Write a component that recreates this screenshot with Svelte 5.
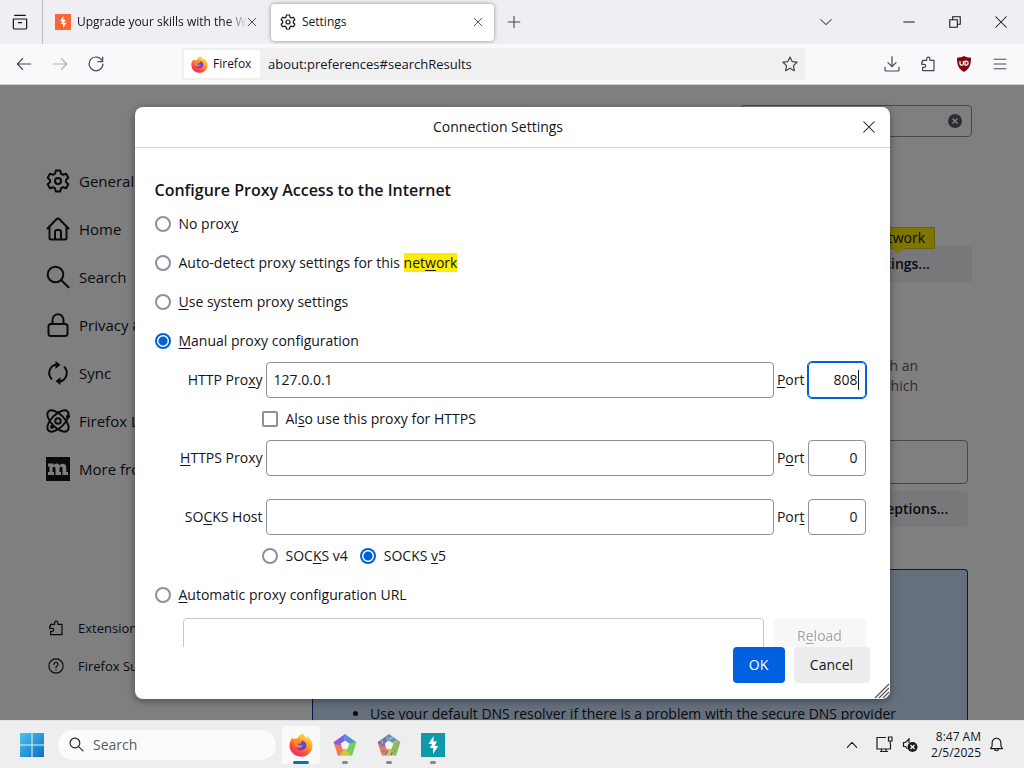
<script>
  const nav = [
    { icon: 'gear', label: 'General' },
    { icon: 'home', label: 'Home' },
    { icon: 'search', label: 'Search' },
    { icon: 'lock', label: 'Privacy & Security' },
    { icon: 'sync', label: 'Sync' },
    { icon: 'labs', label: 'Firefox Labs' },
    { icon: 'mozilla', label: 'More from Mozilla' },
  ];
  const support = [
    { icon: 'puzzle', label: 'Extensions & Themes' },
    { icon: 'help', label: 'Firefox Support' },
  ];

  let mode = $state('manual');
  let socks = $state('5');
  let shareProxy = $state(false);
  let address = $state('about:preferences#searchResults');
  let httpHost = $state('127.0.0.1');
  let httpPort = $state('808');
  let httpsHost = $state('');
  let httpsPort = $state('0');
  let socksHost = $state('');
  let socksPort = $state('0');
  let autoUrl = $state('');

  // Sides of the pentagon, clockwise from the bottom one.
  const sides = [
    { angle: 0, color: '#d3c73f' },
    { angle: 72, color: '#f4794e' },
    { angle: 144, color: '#8560dc' },
    { angle: 216, color: '#5b8de0' },
    { angle: 288, color: '#74cf5c' },
  ];
</script>

{#snippet icon(name, size = 16)}
  <svg class="icon" width={size} height={size} viewBox="0 0 24 24" fill="none" stroke="currentColor" stroke-width={size > 20 ? 2 : 1.8} stroke-linecap="round" stroke-linejoin="round" aria-hidden="true">
    {#if name === 'gear'}
      <path d="M9.8 1.5h4.4l.8 3.2 2 1.1 3.1-1 2.2 3.9-2.3 2.2v2.2l2.3 2.2-2.2 3.9-3.1-1-2 1.2-.8 3.1H9.8L9 19.4l-2-1.2-3.1 1-2.2-3.9L4 13.1v-2.2L1.7 8.7l2.2-3.9 3.1 1 2-1.1z" />
      <circle cx="12" cy="12" r="3" />
    {:else if name === 'home'}
      <path d="M1.5 11.5 10.7 2a1.8 1.8 0 0 1 2.6 0l9.2 9.5M3.5 9.8V21a1.5 1.5 0 0 0 1.5 1.5h14a1.5 1.5 0 0 0 1.5-1.5V9.8M9 22v-7a2 2 0 0 1 2-2h2a2 2 0 0 1 2 2v7" />
    {:else if name === 'search'}
      <circle cx="9.5" cy="9.5" r="7.8" /><path d="m15.3 15.3 7.2 7" />
    {:else if name === 'lock'}
      <rect x="2.5" y="11" width="19" height="12" rx="2.5" /><path d="M6.5 11V6.800a5.500 5.500 0 0 1 11 0V11" />
    {:else if name === 'sync'}
      <path d="M10 3.500a8.700 8.700 0 0 0-4.500 14.300M14 20.500A8.700 8.700 0 0 0 18.500 6.200" />
      <path d="M9.500 0 14.500 3.800 9.500 8zM14.500 16 9.500 20.200l5 3.800z" fill="currentColor" stroke="none" />
    {:else if name === 'labs'}
      <ellipse cx="12" cy="12" rx="13.500" ry="6.500" transform="rotate(45 12 12)" />
      <ellipse cx="12" cy="12" rx="13.500" ry="6.500" transform="rotate(-45 12 12)" />
      <circle cx="12" cy="12" r="2.800" />
      <circle cx="22" cy="7.500" r="1" fill="currentColor" /><circle cx="6" cy="18" r="1" fill="currentColor" />
    {:else if name === 'puzzle'}
      <path d="M4 9V6.500h6V4.200a2.400 2.400 0 0 1 4.800 0v2.300H21V22H4v-5h2.300a2.200 2.200 0 0 0 0-4.500H2.500V9z" />
    {:else if name === 'help'}
      <circle cx="12" cy="12" r="10.700" /><path d="M9 9.500a3 3 0 1 1 4.500 2.600c-1 .6-1.500 1-1.500 2.200M12 17.500v.2" />
    {:else if name === 'back'}
      <path d="M22 12H2.500M10 4l-8 8 8 8" />
    {:else if name === 'forward'}
      <path d="M2 12h19.500M14 4l8 8-8 8" />
    {:else if name === 'reload'}
      <path d="M20.500 6A10.300 10.300 0 1 0 22.300 12M22 1.500v7h-7" />
    {:else if name === 'star'}
      <path d="m12 1.500 3.200 6.800 7.300 1-5.300 5.200 1.300 7.500-6.500-3.600L5.500 22l1.300-7.500L1.500 9.300l7.300-1z" />
    {:else if name === 'download'}
      <path d="M12 1v14.500M6 10l6 6 6-6M1.500 17v3.500a2 2 0 0 0 2 2h17a2 2 0 0 0 2-2V17" />
    {:else if name === 'menu'}
      <path d="M2 4h20M2 12h20M2 20h20" />
    {:else if name === 'close'}
      <path d="m3 3 18 18M21 3 3 21" />
    {:else if name === 'plus'}
      <path d="M12 2v20M2 12h20" />
    {:else if name === 'down'}
      <path d="m3 8 9 8.500L21 8" />
    {:else if name === 'up'}
      <path d="m4 16 8-8.500 8 8.500" />
    {:else if name === 'minimize'}
      <path d="M3 12h18" />
    {:else if name === 'restore'}
      <path d="M3 8h13v13H3zM8 8V3h13v13h-5" stroke-linejoin="miter" />
    {:else if name === 'view'}
      <path d="M2 7.500h20v13a2 2 0 0 1-2 2H4a2 2 0 0 1-2-2zM4 2h16M9.500 13h5" />
    {:else if name === 'bell'}
      <path d="M2.500 18.500h19L19 14.500V9A7 7 0 0 0 5 9v5.500zM9 19a3 3 0 0 0 6 0" />
    {/if}
  </svg>
{/snippet}

{#snippet firefox(size)}
  <svg width={size} height={size} viewBox="0 0 24 24" aria-hidden="true">
    <defs>
      <linearGradient id="flame{size}" x1="0.85" y1="0.05" x2="0.25" y2="1">
        <stop offset="0" stop-color="#fff04a" /><stop offset="0.35" stop-color="#ffa72b" /><stop offset="0.7" stop-color="#ff4f3d" /><stop offset="1" stop-color="#e6276a" />
      </linearGradient>
    </defs>
    <path d="M14.500.5c.4 2.200 1.500 3 3 4.200.7-.4.600-1.200.500-2 3.500 2.300 5.600 6 5.500 10C23.400 19 18.300 23.700 12 23.700S.500 18.700.500 12.600C.500 9.500 1.700 6.700 3.600 4.600c.1 1 .4 1.600.9 2C6 5.500 7.300 5.400 8.300 5.600 9.800 2.300 12 1 14.500.5z" fill="url(#flame{size})" />
    <path d="M12.500 7.500c3 .2 5 2.300 4.800 5.200-.2 2.800-2.500 4.600-5.200 4.600-2.900 0-5.200-2-5.200-4.800 0-1 .3-2 1-2.700 1 1.200 2.500.3 4 .7.500-1 .700-1.700.6-3z" fill="#7140d8" />
    <path d="M4.500 6.600C6.500 5.500 8.200 6 9 7.300c1 .4 2.400.4 3 .8-.4 1.800-3 1.800-3.200 3.400 1.600 2 3.200.4 5 1-1.300 2.700-5.800 3.200-7.900.3-1.100-2-.9-4.500-1.400-6.200z" fill="#ff8a2a" />
  </svg>
{/snippet}

{#snippet lightning(fg, bg, size)}
  <svg width={size} height={size} viewBox="0 0 24 24" aria-hidden="true">
    <rect width="24" height="24" fill={bg} />
    <path d="M12.500 3v5.500h3.500l-2.500 4.500h3.800L12 21v-6H8.700l2.500-4H7.500z" fill={fg} />
  </svg>
{/snippet}

{#snippet pentagon(striped)}
  <svg width="24" height="24" viewBox="-12 -12 24 24" aria-hidden="true">
    {#each sides as side, i}
      <path d="M-6.300 8.700 6.300 8.700 3 4-3 4z" fill={side.color} stroke={side.color} stroke-width="2" stroke-linejoin="round" transform="translate(0 1) rotate({side.angle})" />
      {#if striped}
        <path d="M-4 9-1 4.500M2 9 4 5.500" stroke={sides[(i + 2) % 5].color} stroke-width="1.600" transform="translate(0 1) rotate({side.angle})" />
      {/if}
    {/each}
    <path d="M0 5.500-4.300 2.400-2.600-2.600H2.600L4.300 2.400z" fill="#f4f4f6" transform="translate(0 1) rotate(180)" />
  </svg>
{/snippet}

<div class="screen">
  <header class="tabs">
    <button class="plain view" aria-label="Firefox View">{@render icon('view')}</button>
    <div class="tab first">
      {@render lightning('#fff', '#ff6633', 16)}
      <span class="title fade">Upgrade your skills with the We</span>
      <button class="plain" aria-label="Close tab">{@render icon('close', 10)}</button>
    </div>
    <div class="tab active">
      {@render icon('gear')}
      <span class="title">Settings</span>
      <button class="plain" aria-label="Close tab">{@render icon('close', 10)}</button>
    </div>
    <button class="plain new" aria-label="New tab">{@render icon('plus', 14)}</button>
    <button class="plain list" aria-label="List all tabs">{@render icon('down', 14)}</button>
    <div class="window">
      <button class="plain" aria-label="Minimize">{@render icon('minimize', 14)}</button>
      <button class="plain" aria-label="Restore">{@render icon('restore', 14)}</button>
      <button class="plain" aria-label="Close window">{@render icon('close', 14)}</button>
    </div>
  </header>

  <div class="toolbar">
    <div class="history">
      <button class="plain" aria-label="Back">{@render icon('back')}</button>
      <button class="plain off" aria-label="Forward" disabled>{@render icon('forward')}</button>
      <button class="plain" aria-label="Reload page">{@render icon('reload')}</button>
    </div>
    <div class="urlbar">
      <span class="identity">{@render firefox(17)}Firefox</span>
      <input class="url" aria-label="Address" bind:value={address} />
      <button class="plain" aria-label="Bookmark this page">{@render icon('star')}</button>
    </div>
    <div class="tools">
      <button class="plain" aria-label="Downloads">{@render icon('download')}</button>
      <button class="plain" aria-label="Extensions">{@render icon('puzzle')}</button>
      <button class="plain" aria-label="Ad blocker">
        <svg width="16" height="16" viewBox="0 0 16 16" aria-hidden="true">
          <path d="M8 0c2 1.300 4.500 1.700 7 1.700 0 6.500-1 11-7 14.300C2 12.700 1 8.200 1 1.700 3.500 1.700 6 1.300 8 0z" fill="#800610" />
          <path d="M4 5v2.500a1.700 1.700 0 0 0 3.400 0V5M9 5v4.200h1a2.100 2.100 0 0 0 0-4.200z" fill="none" stroke="#fff" stroke-width="1.200" />
        </svg>
      </button>
      <button class="plain" aria-label="Menu">{@render icon('menu', 14)}</button>
    </div>
  </div>

  <div class="content">
    <div class="prefs">
      <aside>
        <nav>
          {#each nav as item}
            <a href="#{item.icon}">
              {#if item.icon === 'mozilla'}
                <svg width="24" height="24" viewBox="0 0 24 24" aria-hidden="true">
                  <rect width="24" height="24" fill="#15141a" />
                  <path d="M2 6.500h5.500v2c1.200-2.500 4.800-2.700 6 0 1.500-2.700 6.800-2.600 6.800 1.800v4.700H22v3h-5.500v-6.500c0-2.500-3-2.300-3 .2V15H15v3H9.500v-6.500c0-2.500-3-2.300-3 .2V15H8v3H2v-3h1.500V9.500H2z" fill="#fff" />
                </svg>
              {:else}
                {@render icon(item.icon, 24)}
              {/if}
              {item.label}
            </a>
          {/each}
        </nav>
        <nav class="support">
          {#each support as item}
            <a href="#{item.icon}">{@render icon(item.icon, 16)}{item.label}</a>
          {/each}
        </nav>
      </aside>
      <main>
        <div class="find">
          <input aria-label="Find in Settings" />
          <svg width="14" height="14" viewBox="0 0 14 14" aria-hidden="true">
            <circle cx="7" cy="7" r="7" fill="#5b5b66" /><path d="m4.500 4.500 5 5m0-5-5 5" stroke="#fff" stroke-width="1.500" />
          </svg>
        </div>
        <div class="network">
          <span class="tip">network</span>
          <button class="soft">Settings...</button>
        </div>
        <p>with an<br />which</p>
        <div class="choice"></div>
        <button class="soft exceptions">Exceptions...</button>
        <section class="protection">
          <ul><li>Use your default DNS resolver if there is a problem with the secure DNS provider</li></ul>
        </section>
      </main>
    </div>

    <div class="overlay">
      <form class="dialog" role="dialog" aria-labelledby="dialog-title" onsubmit={(e) => e.preventDefault()}>
        <div class="head">
          <span id="dialog-title">Connection Settings</span>
          <button type="button" class="plain" aria-label="Close dialog">{@render icon('close', 14)}</button>
        </div>
        <div class="body">
          <h2>Configure Proxy Access to the Internet</h2>
          <label class="row"><input type="radio" name="mode" value="none" bind:group={mode} /><span>No prox<u>y</u></span></label>
          <label class="row"><input type="radio" name="mode" value="detect" bind:group={mode} /><span>Auto-detect proxy settings for this <mark>net<u>w</u>ork</mark></span></label>
          <label class="row"><input type="radio" name="mode" value="system" bind:group={mode} /><span><u>U</u>se system proxy settings</span></label>
          <label class="row"><input type="radio" name="mode" value="manual" bind:group={mode} /><span><u>M</u>anual proxy configuration</span></label>

          <div class="fields">
            <label for="http">HTTP Pro<u>x</u>y</label>
            <input id="http" type="text" bind:value={httpHost} />
            <label for="http-port"><u>P</u>ort</label>
            <span class="focused"><input id="http-port" class="port" type="text" bind:value={httpPort} /></span>
          </div>
          <div class="row inset">
            <label class="row"><input type="checkbox" bind:checked={shareProxy} /><span>Al<u>s</u>o use this proxy for HTTPS</span></label>
          </div>
          <div class="fields">
            <label for="https"><u>H</u>TTPS Proxy</label>
            <input id="https" type="text" bind:value={httpsHost} />
            <label for="https-port">P<u>o</u>rt</label>
            <input id="https-port" class="port" type="text" bind:value={httpsPort} />
          </div>
          <div class="fields spaced">
            <label for="socks">SO<u>C</u>KS Host</label>
            <input id="socks" type="text" bind:value={socksHost} />
            <label for="socks-port">Por<u>t</u></label>
            <input id="socks-port" class="port" type="text" bind:value={socksPort} />
          </div>
          <div class="row inset">
            <label class="row"><input type="radio" name="socks" value="4" bind:group={socks} /><span>SOC<u>K</u>S v4</span></label>
            <label class="row"><input type="radio" name="socks" value="5" bind:group={socks} /><span>SOCKS <u>v</u>5</span></label>
          </div>
          <label class="row"><input type="radio" name="mode" value="auto" bind:group={mode} /><span><u>A</u>utomatic proxy configuration URL</span></label>
          <div class="auto">
            <input type="text" aria-label="Automatic proxy configuration URL" bind:value={autoUrl} disabled />
            <button type="button" disabled>R<u>e</u>load</button>
          </div>
        </div>
        <div class="actions">
          <button type="submit" class="primary">OK</button>
          <button type="button">Cancel</button>
        </div>
        <svg class="grip" width="16" height="16" viewBox="0 0 16 16" aria-hidden="true">
          <path d="M1 15 15 1M5 15 15 5M9 15l6-6M13 15l2-2" stroke="#55555c" stroke-width="1.200" />
        </svg>
      </form>
    </div>
  </div>

  <footer>
    <button class="plain start" aria-label="Start">
      <svg width="24" height="24" viewBox="0 0 24 24" aria-hidden="true">
        <defs><linearGradient id="win" x1="0" y1="0" x2="1" y2="1"><stop offset="0" stop-color="#4cc3ee" /><stop offset="1" stop-color="#0a6fc4" /></linearGradient></defs>
        <path d="M0 0h11.500v11.500H0zM12.500 0H24v11.500H12.500zM0 12.500h11.500V24H0zM12.500 12.500H24V24H12.500z" fill="url(#win)" />
      </svg>
    </button>
    <button class="pill">{@render icon('search', 15)}Search</button>
    <div class="apps">
      <button class="plain app current" aria-label="Firefox">{@render firefox(24)}</button>
      <button class="plain app" aria-label="Palette">{@render pentagon(false)}</button>
      <button class="plain app" aria-label="Palette editor">{@render pentagon(true)}</button>
      <button class="plain app" aria-label="Burp Suite">{@render lightning('#fff', '#0e9aa7', 24)}</button>
    </div>
    <div class="tray">
      <button class="plain chevron" aria-label="Hidden icons">{@render icon('up', 14)}</button>
      <svg width="17" height="17" viewBox="0 0 17 17" fill="none" stroke="#1b1b1b" stroke-width="1.200" aria-hidden="true">
        <path d="M10 1.500H1v11.500h13.500V8M5.500 13v2.500M10 13v2.500M4 15.500h8M12.500 1h3.500v4h-3.500zM14.200 5v3" />
      </svg>
      <svg class="sound" width="16" height="16" viewBox="0 0 16 16" aria-hidden="true">
        <path d="M5.500 12 3.500 9.500H1.500v-4h2L7 2v4" fill="none" stroke="#1b1b1b" stroke-width="1.200" />
        <circle cx="10.500" cy="10" r="5" fill="#1b1b1b" /><path d="m8.500 8 4 4m0-4-4 4" stroke="#fff" stroke-width="1.200" />
      </svg>
      <time>8:47 AM<br />2/5/2025</time>
      <button class="plain" aria-label="Notifications">{@render icon('bell', 15)}</button>
    </div>
  </footer>
</div>

<style>
  :global(body) { overflow: hidden; }
  .screen, .screen * { box-sizing: border-box; }
  .screen {
    display: flex;
    flex-direction: column;
    height: 100vh;
    font-family: "Open Sans", "Noto Sans", sans-serif;
    font-size: 14px;
    line-height: 20px;
    color: #15141a;
  }
  button, input { font: inherit; color: inherit; margin: 0; }
  svg { display: block; flex: none; }
  .plain { display: grid; place-items: center; padding: 0; border: 0; background: none; }
  u { text-underline-offset: 2px; text-decoration-thickness: 1px; }

  .tabs { display: flex; align-items: center; height: 44px; background: #efeef4; font-size: 12px; }
  .view { width: 43px; height: 100%; padding-right: 3px; border-right: 1px solid #bcbcc4; }
  .tab { display: flex; align-items: center; gap: 6px; width: 228px; height: 37px; padding: 0 12px; }
  .tab.first { padding-right: 14px; }
  .first .title { margin-right: -6px; }
  .tab.active { width: 223px; padding: 0 11px 0 9px; border-radius: 4px; background: #fff; box-shadow: 0 0 4px rgba(0, 0, 0, 0.4); }
  .title { flex: 1; min-width: 0; overflow: hidden; white-space: nowrap; }
  .fade { -webkit-mask-image: linear-gradient(to left, transparent, #000 20px); mask-image: linear-gradient(to left, transparent, #000 20px); }
  .new { width: 40px; height: 36px; color: #45454d; }
  .list { width: 40px; height: 36px; margin-left: auto; color: #55555c; }
  .window { display: flex; padding-left: 40px; }
  .window button { width: 46px; height: 36px; }

  .toolbar { display: flex; align-items: center; height: 41px; background: #f9f9fb; border-bottom: 1px solid #ccccd0; color: #45454d; }
  .history { display: flex; padding-left: 6px; width: 182px; }
  .history button { width: 36px; height: 32px; }
  .off { opacity: 0.4; }
  .urlbar { flex: 1; display: flex; align-items: center; height: 32px; padding: 2px 7px 2px 2px; background: #f0f0f1; color: #15141a; font-size: 13px; }
  .identity { display: flex; align-items: center; gap: 5px; width: 76px; height: 28px; padding-left: 7px; background: #fff; border-radius: 2px; font-size: 12px; }
  .url { flex: 1; min-width: 0; border: 0; padding: 0 8px; background: none; outline: 0; }
  .urlbar button { color: #45454d; }
  .tools { display: flex; padding: 0 6px 0 69px; }
  .tools button { width: 36px; height: 32px; }

  .content { position: relative; flex: 1; min-height: 0; overflow: hidden; background: #fff; }
  .prefs { display: grid; grid-template-columns: 312px 1fr; height: 100%; padding-right: 52px; }
  aside { display: flex; flex-direction: column; justify-content: space-between; padding: 72px 0 35px 46px; }
  aside a { display: flex; align-items: center; gap: 9px; height: 48px; color: #15141a; text-decoration: none; font-size: 15px; white-space: nowrap; }
  .support a { gap: 14px; height: 38px; padding-left: 2px; font-size: 13px; }
  main { display: flex; flex-direction: column; align-items: flex-end; min-height: 0; overflow: hidden; padding-top: 20px; }
  .find { flex: none; display: flex; align-items: center; width: 232px; height: 32px; padding: 0 9px; border: 1px solid #8f8f9d; border-radius: 4px; }
  .find input { flex: 1; min-width: 0; border: 0; background: none; }
  .network { position: relative; flex: none; margin-top: 109px; }
  .soft { flex: none; width: 150px; height: 36px; border: 0; border-radius: 4px; background: #f0f0f4; font-weight: 600; }
  .tip { position: absolute; z-index: 1; right: 37px; top: -19px; height: 22px; padding: 0 9px; background: #ffec00; border: 1px solid #d7c600; }
  .tip::after { content: ""; position: absolute; left: 50%; top: 20px; margin-left: -6px; border: 6px solid transparent; border-top-color: #ffec00; border-bottom: 0; }
  main p { flex: none; margin: 74px 54px 0 0; color: #5b5b66; text-align: right; }
  .choice { flex: none; width: 652px; height: 44px; margin: 44px 4px 7px 0; border: 1px solid #8f8f9d; border-radius: 4px; }
  .exceptions { width: 124px; margin-right: 4px; }
  .protection { flex: 1; align-self: stretch; min-height: 0; margin: 42px 4px 0 0; padding-top: 132px; border: 1px solid #0032a8; border-bottom: 0; border-radius: 4px 4px 0 0; background: #cce0fa; }
  ul { margin: 0; padding-left: 57px; white-space: nowrap; line-height: 24px; }

  .overlay { position: absolute; z-index: 2; inset: 0; display: flex; justify-content: center; padding: 22px 16px 21px; background: rgba(0, 0, 0, 0.5); }
  .dialog { position: relative; display: flex; flex-direction: column; flex: 0 1 755px; min-width: 0; border-radius: 8px; background: #fff; box-shadow: 0 2px 8px rgba(0, 0, 0, 0.4); overflow: hidden; }
  .head { flex: none; display: grid; grid-template-columns: 1fr 14px; height: 41px; padding-right: 14px; align-items: center; border-bottom: 1px solid #cfcfd8; text-align: center; }
  .head button { height: 40px; }
  .body { flex: 1; min-height: 0; overflow: hidden; padding: 30px 24px 0 20px; }
  h2 { margin: 0 0 2px; font-size: 16px; line-height: 24px; font-weight: 600; }
  .row { display: flex; align-items: center; gap: 8px; height: 39px; }
  .row.inset { gap: 12px; padding-left: 107px; }
  mark { background: #ffec00; color: inherit; }
  input[type="radio"], input[type="checkbox"] { appearance: none; flex: none; width: 16px; height: 16px; border: 2px solid #8f8f9d; background: #fff; }
  input[type="radio"] { border-radius: 50%; }
  input[type="checkbox"] { border-radius: 2px; }
  input[type="radio"]:checked { border-color: #0061d6; background: radial-gradient(circle, #0061d6 4px, #fff 5px); }
  .fields { display: grid; grid-template-columns: 108px 1fr auto 58px; gap: 3px; align-items: center; height: 39px; text-align: right; white-space: nowrap; }
  .fields.spaced { margin-top: 20px; }
  input[type="text"] { width: 100%; min-width: 0; height: 36px; padding: 0 7px; border: 1px solid #8f8f9d; border-radius: 4px; background: #fff; }
  .port { text-align: right; }
  .focused { position: relative; }
  .focused .port { display: block; border-color: #0061d6; outline: 1px solid #0061d6; }
  .focused::after { content: ""; position: absolute; right: 7px; top: 8px; width: 1px; height: 20px; background: #15141a; }
  .auto { display: flex; gap: 10px; margin-top: 4px; padding-left: 28px; }
  .auto input { flex: 1; opacity: 0.5; }
  .auto button { width: 92px; opacity: 0.4; }
  .auto button, .actions button { height: 36px; border: 0; border-radius: 4px; background: #ededf0; }
  .actions { flex: none; display: flex; justify-content: flex-end; gap: 9px; padding: 0 20px 16px; }
  .actions button { width: 76px; }
  .actions .primary { width: 52px; background: #0061e0; color: #fff; }
  .grip { position: absolute; right: 0; bottom: 0; }

  footer { flex: none; display: flex; align-items: center; height: 48px; background: #eeeeee; border-top: 1px solid #e2e2e2; }
  .start { width: 46px; height: 40px; margin-left: 9px; }
  .pill { display: flex; align-items: center; gap: 9px; width: 218px; height: 30px; margin-left: 3px; padding: 0 11px; border: 0; border-radius: 15px; background: #fbfbfb; color: #5c5c5c; }
  .pill :global(svg) { color: #222; }
  .apps { display: flex; gap: 6px; padding-left: 6px; }
  .app { position: relative; width: 38px; height: 38px; border-radius: 4px; }
  .app.current { background: #fafafa; }
  .app::after { content: ""; position: absolute; left: 50%; bottom: 0; width: 6px; height: 3px; margin-left: -3px; border-radius: 2px; background: #868686; }
  .app.current::after { width: 16px; margin-left: -8px; background: #0078a8; }
  .tray { display: flex; align-items: center; margin-left: auto; padding-right: 20px; }
  .chevron { margin-right: 17px; }
  .sound { margin-left: 9px; }
  time { margin: 0 8px 0 13px; text-align: right; font-size: 12px; line-height: 16px; }
</style>
